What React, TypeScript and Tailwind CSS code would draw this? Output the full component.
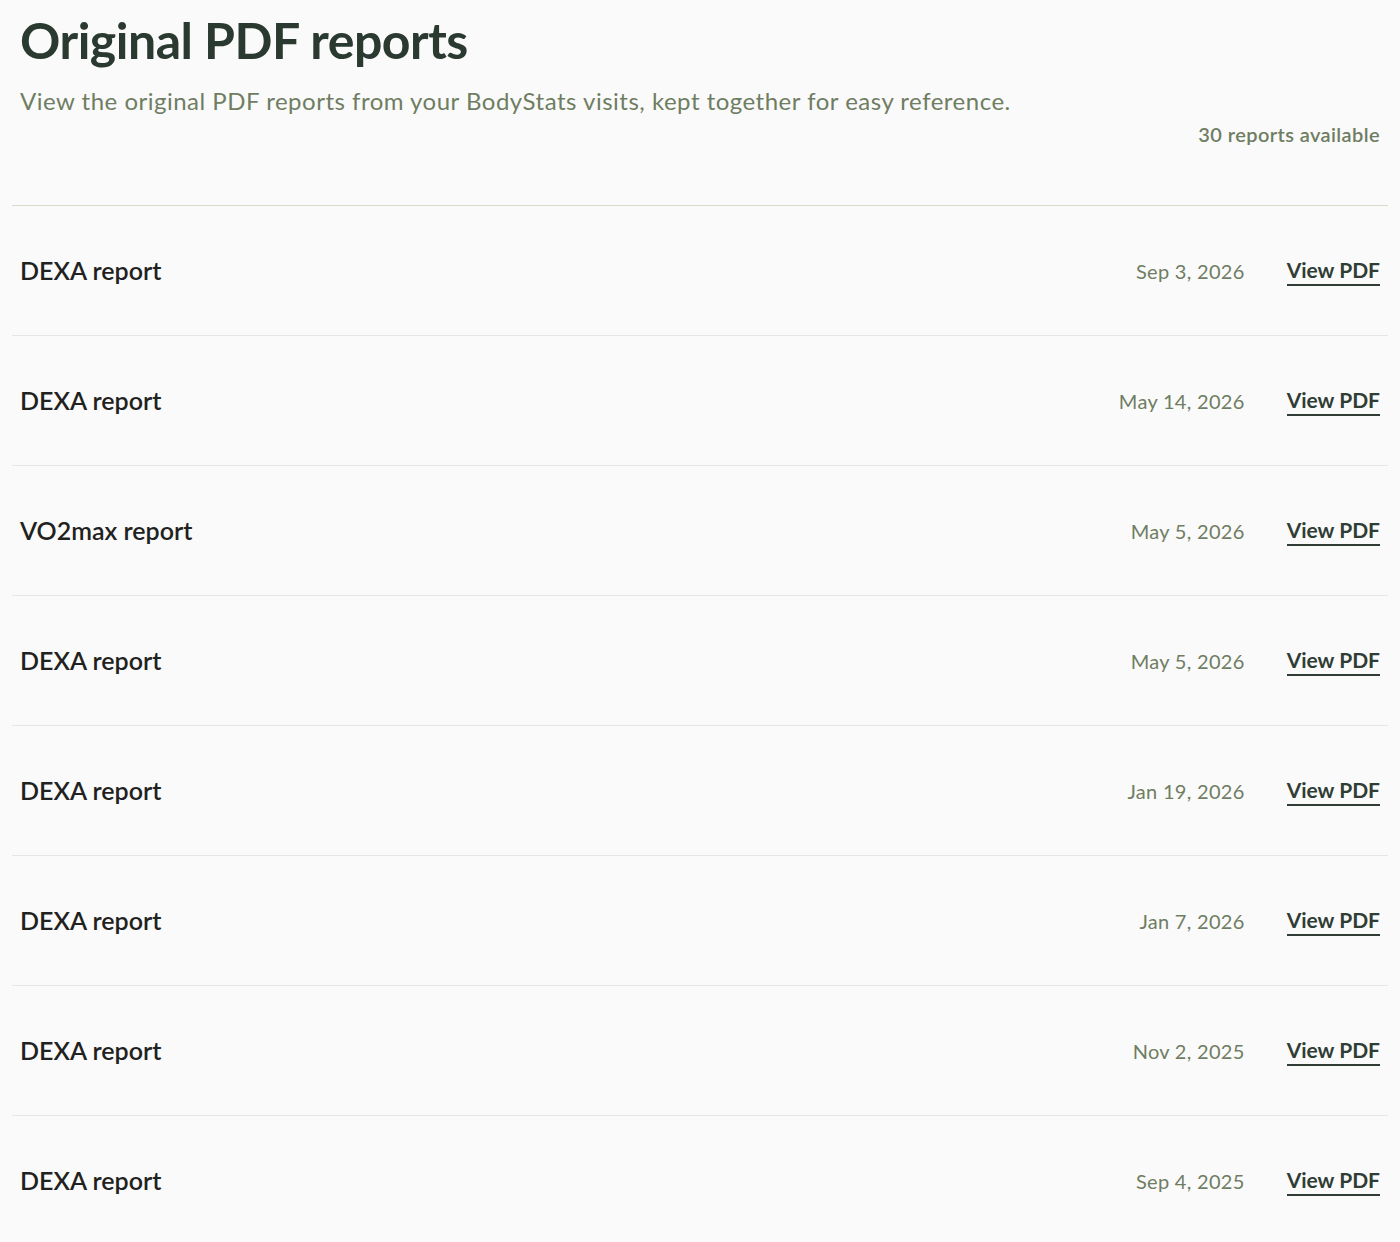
const reports = [
  { title: 'DEXA report', date: 'Sep 3, 2026' },
  { title: 'DEXA report', date: 'May 14, 2026' },
  { title: 'VO2max report', date: 'May 5, 2026' },
  { title: 'DEXA report', date: 'May 5, 2026' },
  { title: 'DEXA report', date: 'Jan 19, 2026' },
  { title: 'DEXA report', date: 'Jan 7, 2026' },
  { title: 'DEXA report', date: 'Nov 2, 2025' },
  { title: 'DEXA report', date: 'Sep 4, 2025' },
];

export default function App() {
  return (
    <div className="min-h-screen bg-[#fafafa] px-3 font-['Lato',sans-serif]">
      <div className="px-2 pt-[10px] pb-[59px] border-b border-[#ddd9cb]">
        <h1 className="text-[50px] leading-[60px] font-bold tracking-[-0.5px] text-[#2a3a30]">
          Original PDF reports
        </h1>
        <p className="mt-[16px] text-[24px] leading-[30px] tracking-[0.5px] text-[#6f7d62]">
          View the original PDF reports from your BodyStats visits, kept together for easy reference.
        </p>
        <p className="mt-[6px] text-right text-[20px] leading-[24px] tracking-[0.4px] font-semibold text-[#6f7d62]">
          30 reports available
        </p>
      </div>
      <ul>
        {reports.map((r, i) => (
          <li
            key={i}
            className="h-[130px] flex items-center justify-between px-2 border-b border-[#e9e5e2]"
          >
            <span className="text-[25px] font-semibold text-[#1f2220]">{r.title}</span>
            <div className="flex items-center gap-[42px]">
              <span className="text-[20px] tracking-[0.3px] text-[#6f7d62]">{r.date}</span>
              <a
                href="#"
                className="text-[21px] font-bold text-[#2f3d34] border-b-2 border-[#2f3d34] leading-[28px]"
              >
                View PDF
              </a>
            </div>
          </li>
        ))}
      </ul>
    </div>
  );
}
